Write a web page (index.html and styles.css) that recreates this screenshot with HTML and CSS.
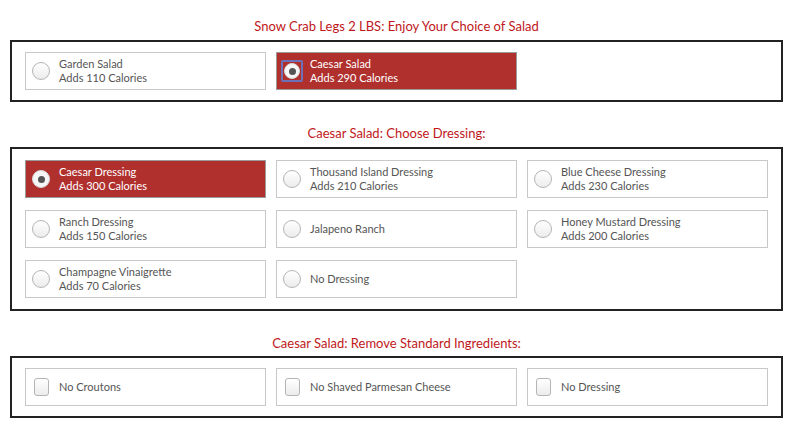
FILE: index.html
```html
<!DOCTYPE html>
<html>
<head>
<meta charset="utf-8">
<link rel="stylesheet" href="styles.css">
</head>
<body>
<div class="page">
  <section class="group">
    <h2 class="title">Snow Crab Legs 2 LBS: Enjoy Your Choice of Salad</h2>
    <div class="box">
      <div class="opt"><span class="radio"></span><span class="label">Garden Salad<br>Adds 110 Calories</span></div>
      <div class="opt sel"><span class="focus"><span class="radio on"></span></span><span class="label">Caesar Salad<br>Adds 290 Calories</span></div>
    </div>
  </section>
  <section class="group">
    <h2 class="title">Caesar Salad: Choose Dressing:</h2>
    <div class="box">
      <div class="opt sel"><span class="radio on"></span><span class="label">Caesar Dressing<br>Adds 300 Calories</span></div>
      <div class="opt"><span class="radio"></span><span class="label">Thousand Island Dressing<br>Adds 210 Calories</span></div>
      <div class="opt"><span class="radio"></span><span class="label">Blue Cheese Dressing<br>Adds 230 Calories</span></div>
      <div class="opt"><span class="radio"></span><span class="label">Ranch Dressing<br>Adds 150 Calories</span></div>
      <div class="opt"><span class="radio"></span><span class="label">Jalapeno Ranch</span></div>
      <div class="opt"><span class="radio"></span><span class="label">Honey Mustard Dressing<br>Adds 200 Calories</span></div>
      <div class="opt"><span class="radio"></span><span class="label">Champagne Vinaigrette<br>Adds 70 Calories</span></div>
      <div class="opt"><span class="radio"></span><span class="label">No Dressing</span></div>
    </div>
  </section>
  <section class="group">
    <h2 class="title">Caesar Salad: Remove Standard Ingredients:</h2>
    <div class="box">
      <div class="opt"><span class="check"></span><span class="label">No Croutons</span></div>
      <div class="opt"><span class="check"></span><span class="label">No Shaved Parmesan Cheese</span></div>
      <div class="opt"><span class="check"></span><span class="label">No Dressing</span></div>
    </div>
  </section>
</div>
</body>
</html>
```
FILE: styles.css
```css
* { box-sizing: border-box; }
html, body { margin: 0; padding: 0; background: #fff; }
body { font-family: "Lato", "Liberation Sans", sans-serif; }
.page { padding: 18px 17px 0 10px; display: flex; flex-direction: column; gap: 23px; }
.title {
  margin: 0 0 6px;
  font-size: 13px;
  line-height: 16px;
  font-weight: normal;
  color: #c0171b;
  text-align: center;
}
.group:last-child .title { margin-top: 1px; margin-bottom: 5px; }
.box {
  border: 2px solid #222;
  padding: 10px 13px;
  display: grid;
  grid-template-columns: repeat(3, 241px);
  column-gap: 10px;
  row-gap: 12px;
}
.group:nth-child(2) .box { padding-top: 11px; padding-bottom: 11px; }
.opt {
  height: 38px;
  border: 1px solid #c8c8c8;
  display: flex;
  align-items: center;
  padding-left: 6px;
  color: #555;
  font-size: 11px;
  line-height: 14px;
  background: #fff;
}
.opt.sel { background: #b0302e; border-color: #9a9a9a; color: #fff; }
.label { margin-left: 9px; }
.radio {
  width: 18px; height: 18px;
  border-radius: 50%;
  border: 1px solid #b5b5b5;
  background: linear-gradient(#fff, #ececec);
  flex: none;
  display: flex; align-items: center; justify-content: center;
}
.radio.on { background: #f6f6f6; border-color: #d8d8d8; }
.radio.on::after {
  content: "";
  width: 7px; height: 7px;
  border-radius: 50%;
  background: #555;
}
.focus {
  width: 22px; height: 22px;
  margin-left: -2px; margin-right: -2px;
  border: 2px solid #6d72b8;
  border-radius: 2px;
  display: flex; align-items: center; justify-content: center;
  flex: none;
}
.focus .radio { width: 16px; height: 16px; }
.check {
  width: 15px; height: 18px;
  border: 1px solid #b5b5b5;
  border-radius: 3px;
  background: linear-gradient(#fff, #ececec);
  flex: none;
  margin-left: 2px;
}
.check + .label { margin-left: 10px; }
```
